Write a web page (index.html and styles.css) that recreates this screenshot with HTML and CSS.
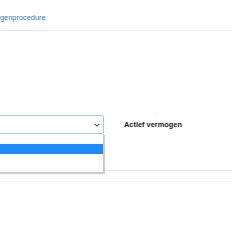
FILE: index.html
```html
<!DOCTYPE html>
<html lang="nl">
<head>
<meta charset="utf-8">
<link rel="stylesheet" href="styles.css">
</head>
<body>
<div class="page">
  <header class="topbar">
    <a class="crumb" href="#">genprocedure</a>
  </header>
  <section class="form">
    <div class="row">
      <div class="field">
        <div class="select">
          <svg class="chev" width="6" height="4" viewBox="0 0 6 4"><path d="M0.6 0.8 L3 3.1 L5.4 0.8" fill="none" stroke="#555" stroke-width="1.1"/></svg>
        </div>
        <ul class="menu">
          <li class="opt"></li>
          <li class="opt active"></li>
          <li class="opt short"></li>
          <li class="opt short"></li>
        </ul>
      </div>
      <div class="label">Actief vermogen</div>
    </div>
    <div class="rule"></div>
    <div class="rule faint"></div>
  </section>
</div>
</body>
</html>
```

FILE: styles.css
```css
html, body {
  margin: 0;
  padding: 0;
  background: #ffffff;
  font-family: "Liberation Sans", Arial, sans-serif;
}
.page {
  width: 232px;
  height: 232px;
  overflow: hidden;
}
.topbar {
  height: 30px;
  border-bottom: 1px solid #e8e8e8;
  display: flex;
  align-items: flex-start;
}
.crumb {
  margin-top: 13px;
  font-size: 7.4px;
  line-height: 9px;
  color: #3373c2;
  text-decoration: none;
}
.form {
  padding-top: 84px;
}
.row {
  display: flex;
  align-items: center;
  height: 19px;
}
.field {
  position: relative;
  width: 106px;
  margin-left: -2px;
  height: 19px;
}
.select {
  box-sizing: border-box;
  height: 19px;
  border: 1px solid #a9c9ef;
  border-radius: 2px;
  box-shadow: 0 0 1px #cfe0f5;
  display: flex;
  align-items: center;
  justify-content: flex-end;
  padding-right: 3px;
}
.chev {
  display: block;
}
.menu {
  position: absolute;
  left: 0;
  top: 19px;
  width: 104px;
  margin: 0;
  padding: 0;
  list-style: none;
  background: #fff;
  border: 1px solid #c8c8c8;
  border-top: none;
  box-shadow: 1px 1px 1px rgba(0,0,0,0.18);
  z-index: 2;
}
.opt {
  height: 10px;
}
.opt.short {
  height: 9px;
}
.opt.active {
  background: #1e8bff;
}
.label {
  margin-left: 20px;
  font-size: 7.4px;
  font-weight: bold;
  color: #222;
}
.rule {
  margin-top: 36px;
  height: 1px;
  background: #e8e8e8;
}
.rule.faint {
  margin-top: 10px;
  background: #f4f4f4;
}
```
